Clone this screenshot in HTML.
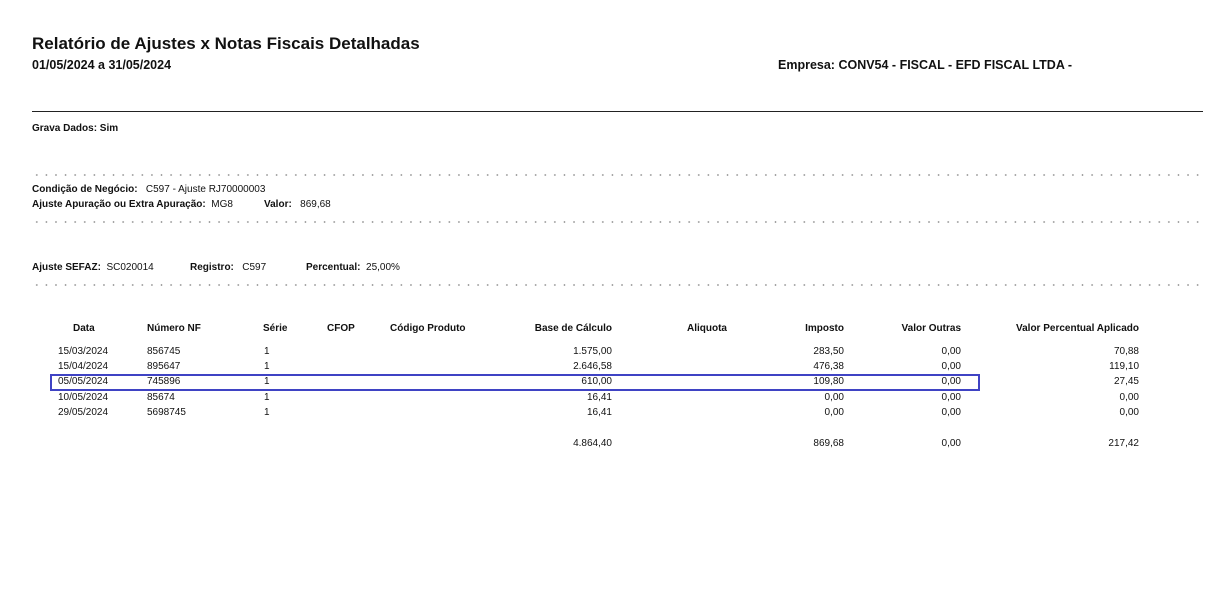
<!DOCTYPE html>
<html><head><meta charset="utf-8"><style>
body{margin:0;width:1232px;height:605px;background:#fff;position:relative;font-family:"Liberation Sans",sans-serif;color:#111;overflow:hidden}
.a{position:absolute;white-space:nowrap;font-size:10px;line-height:12px}
.b{font-weight:bold}
.r{text-align:right}
.dots{position:absolute;left:32px;width:1172px;height:2px;background-image:radial-gradient(circle,#888 0.7px,transparent 0.9px);background-size:9.6px 2px;background-repeat:repeat-x}
</style></head><body>
<div class="a b" style="left:32px;top:33px;font-size:17px;line-height:22px">Relatório de Ajustes x Notas Fiscais Detalhadas</div>
<div class="a b" style="left:32px;top:57px;font-size:12.5px;line-height:16px">01/05/2024 a 31/05/2024</div>
<div class="a b" style="left:778px;top:57px;font-size:12.5px;line-height:16px">Empresa: CONV54 - FISCAL - EFD FISCAL LTDA -</div>
<div style="position:absolute;left:32px;top:111px;width:1171px;height:1px;background:#222"></div>
<div class="a b" style="left:32px;top:123px">Grava Dados: Sim</div>
<div class="dots" style="top:174px"></div>
<div class="a" style="left:32px;top:184px"><b>Condição de Negócio:</b>&nbsp;&nbsp; C597 - Ajuste RJ70000003</div>
<div class="a" style="left:32px;top:199px"><b>Ajuste Apuração ou Extra Apuração:</b>&nbsp; MG8</div>
<div class="a" style="left:264px;top:199px"><b>Valor:</b>&nbsp;&nbsp; 869,68</div>
<div class="dots" style="top:221px"></div>
<div class="a" style="left:32px;top:262px"><b>Ajuste SEFAZ:</b>&nbsp;&nbsp;SC020014</div>
<div class="a" style="left:190px;top:262px"><b>Registro:</b>&nbsp;&nbsp; C597</div>
<div class="a" style="left:306px;top:262px"><b>Percentual:</b>&nbsp;&nbsp;25,00%</div>
<div class="dots" style="top:284px"></div>

<div class="a b" style="left:73px;top:323px">Data</div>
<div class="a b" style="left:147px;top:323px">Número NF</div>
<div class="a b" style="left:263px;top:323px">Série</div>
<div class="a b" style="left:327px;top:323px">CFOP</div>
<div class="a b" style="left:390px;top:323px">Código Produto</div>
<div class="a b r" style="right:620px;top:323px">Base de Cálculo</div>
<div class="a b" style="left:687px;top:323px">Aliquota</div>
<div class="a b r" style="right:388px;top:323px">Imposto</div>
<div class="a b r" style="right:271px;top:323px">Valor Outras</div>
<div class="a b r" style="right:93px;top:323px">Valor Percentual Aplicado</div>

<div style="position:absolute;left:50px;top:374px;width:926px;height:13px;border:2px solid #3f43c4"></div>

<div class="a" style="left:58px;top:346px">15/03/2024</div><div class="a" style="left:147px;top:346px">856745</div><div class="a" style="left:264px;top:346px">1</div>
<div class="a r" style="right:620px;top:346px">1.575,00</div><div class="a r" style="right:388px;top:346px">283,50</div><div class="a r" style="right:271px;top:346px">0,00</div><div class="a r" style="right:93px;top:346px">70,88</div>

<div class="a" style="left:58px;top:361px">15/04/2024</div><div class="a" style="left:147px;top:361px">895647</div><div class="a" style="left:264px;top:361px">1</div>
<div class="a r" style="right:620px;top:361px">2.646,58</div><div class="a r" style="right:388px;top:361px">476,38</div><div class="a r" style="right:271px;top:361px">0,00</div><div class="a r" style="right:93px;top:361px">119,10</div>

<div class="a" style="left:58px;top:376px">05/05/2024</div><div class="a" style="left:147px;top:376px">745896</div><div class="a" style="left:264px;top:376px">1</div>
<div class="a r" style="right:620px;top:376px">610,00</div><div class="a r" style="right:388px;top:376px">109,80</div><div class="a r" style="right:271px;top:376px">0,00</div><div class="a r" style="right:93px;top:376px">27,45</div>

<div class="a" style="left:58px;top:392px">10/05/2024</div><div class="a" style="left:147px;top:392px">85674</div><div class="a" style="left:264px;top:392px">1</div>
<div class="a r" style="right:620px;top:392px">16,41</div><div class="a r" style="right:388px;top:392px">0,00</div><div class="a r" style="right:271px;top:392px">0,00</div><div class="a r" style="right:93px;top:392px">0,00</div>

<div class="a" style="left:58px;top:407px">29/05/2024</div><div class="a" style="left:147px;top:407px">5698745</div><div class="a" style="left:264px;top:407px">1</div>
<div class="a r" style="right:620px;top:407px">16,41</div><div class="a r" style="right:388px;top:407px">0,00</div><div class="a r" style="right:271px;top:407px">0,00</div><div class="a r" style="right:93px;top:407px">0,00</div>

<div class="a r" style="right:620px;top:438px">4.864,40</div><div class="a r" style="right:388px;top:438px">869,68</div><div class="a r" style="right:271px;top:438px">0,00</div><div class="a r" style="right:93px;top:438px">217,42</div>
</body></html>
